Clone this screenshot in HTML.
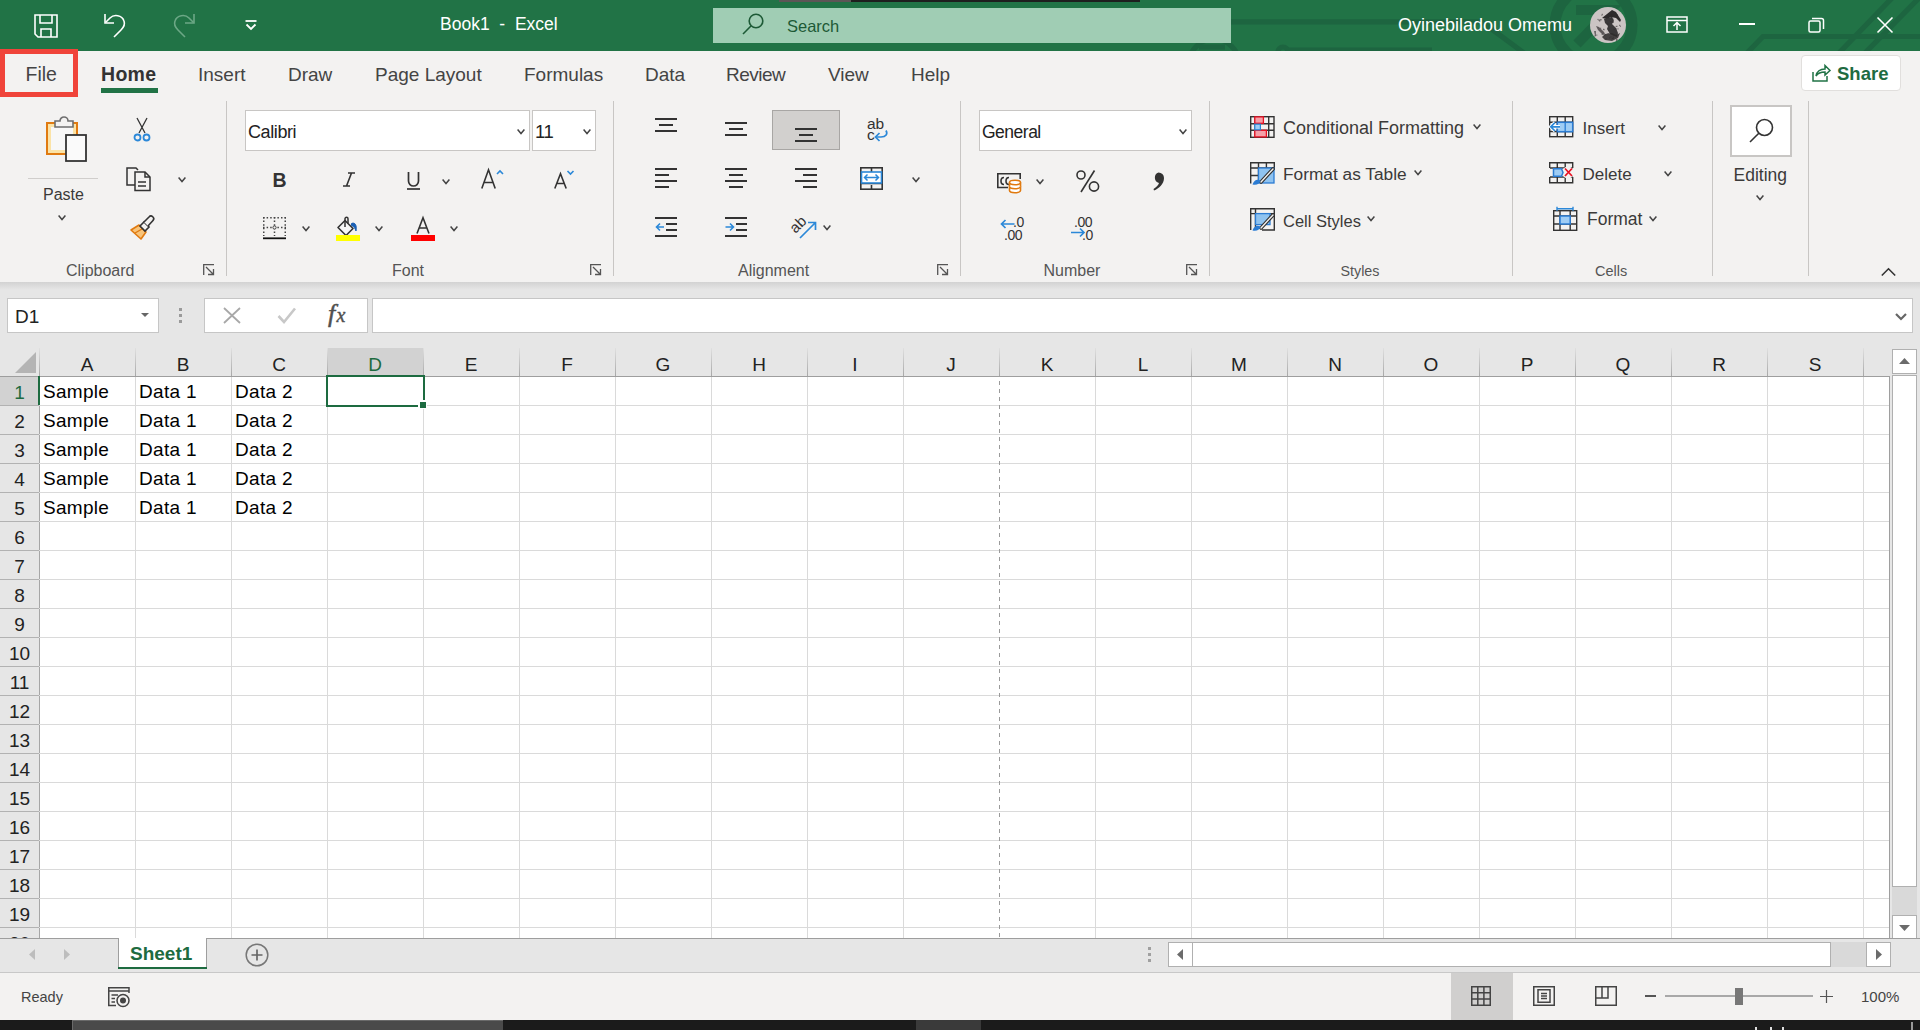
<!DOCTYPE html><html><head><meta charset="utf-8"><style>
html,body{margin:0;padding:0;width:1920px;height:1030px;overflow:hidden;background:#f3f2f1;font-family:"Liberation Sans",sans-serif;position:relative}
.t{position:absolute;white-space:pre;line-height:1}
svg{overflow:visible}
</style></head><body>
<div style="position:absolute;left:0px;top:0px;width:1920px;height:51px;background:#217346"></div>
<div style="position:absolute;left:779px;top:0px;width:72px;height:2px;background:#5c5656"></div>
<div style="position:absolute;left:851px;top:0px;width:289px;height:2px;background:#1e1e1e"></div>
<svg style="position:absolute;left:0px;top:0px;clip-path:inset(0 0 0 0)" width="1920" height="51" viewBox="0 0 1920 51"><g fill="none" stroke="#1d6540" stroke-width="5.2">
<path d="M1231 21.8 H1482 L1524 53"/>
<circle cx="1214" cy="64" r="25"/>
<path d="M1199 47 H1225"/>
<circle cx="1283" cy="52" r="5"/>
<path d="M1288 50 H1432"/>
<circle cx="1593.5" cy="25" r="38.5" stroke-width="11"/>
<path d="M1576 10 H1610 L1577 44" stroke-width="10" stroke-linejoin="miter"/>
<path d="M1747 53 L1763 36.5 H1922"/>
<path d="M1839 53 L1893 -3"/>
<path d="M1865 53 L1922 -5"/>
</g></svg>
<svg style="position:absolute;left:34px;top:14px;" width="24" height="24" viewBox="0 0 24 24"><g fill="none" stroke="#fff" stroke-width="1.6">
<path d="M1 1 H23 V23 H4 L1 20 Z"/>
<path d="M6 1 V9 H18 V1"/>
<path d="M7 23 V15 H17 V23"/>
</g></svg>
<svg style="position:absolute;left:104px;top:13px;" width="22" height="25" viewBox="0 0 22 25"><g fill="none" stroke="#fff" stroke-width="1.6">
<path d="M1 1 V10 H10"/>
<path d="M1.5 9.5 L6 5 C10 1 18 2 20 8 C21.5 12 19 15 17 17 L10 24"/>
</g></svg>
<svg style="position:absolute;left:173px;top:13px;" width="22" height="25" viewBox="0 0 22 25"><g fill="none" stroke="#7fb596" stroke-width="1.6" opacity="0.8">
<path d="M21 1 V10 H12"/>
<path d="M20.5 9.5 L16 5 C12 1 4 2 2 8 C0.5 12 3 15 5 17 L12 24"/>
</g></svg>
<svg style="position:absolute;left:245px;top:20px;" width="12" height="10" viewBox="0 0 12 10"><path d="M0.5 1 H11.5" stroke="#fff" stroke-width="1.8"/><path d="M1.5 4.5 L6 9 L10.5 4.5" fill="none" stroke="#fff" stroke-width="1.8"/></svg>
<div class="t" style="left:440.0px;top:15.7px;font-size:17.5px;color:#fff;font-weight:400;">Book1  -  Excel</div>
<div style="position:absolute;left:713px;top:8px;width:518px;height:35px;background:#a0cdb4"></div>
<svg style="position:absolute;left:741px;top:13px;" width="24" height="24" viewBox="0 0 24 24"><g fill="none" stroke="#1d5a36" stroke-width="1.6"><circle cx="15" cy="8" r="6.8"/><path d="M10.2 12.8 L2 21"/></g></svg>
<div class="t" style="left:787.0px;top:18.0px;font-size:16.5px;color:#1d5a36;font-weight:400;">Search</div>
<div class="t" style="left:1398.0px;top:16.3px;font-size:18px;color:#fff;font-weight:400;">Oyinebiladou Omemu</div>
<svg style="position:absolute;left:1590px;top:7px;" width="36" height="36" viewBox="0 0 36 36"><defs><clipPath id="av"><circle cx="18" cy="18" r="18"/></clipPath></defs><circle cx="18" cy="18" r="18" fill="#cbc4c4"/>
<g clip-path="url(#av)" fill="#2e2a2c">
<path d="M12 11 L22 3 L26 5 L31 13 L30 15 L26 11 L21 10 L17 12 Z"/>
<path d="M14 12 L22 10 L24 14 L22 17 L26 21 L28 26 L27 30 L24 29 L20 27 L17 22 L18 19 L15 16 Z" opacity="0.92"/>
<path d="M15 27 L22 26 L26 28 L30 26 L28 31 L22 34 L15 33 L12 30 Z" opacity="0.85"/>
<path d="M6 19 L9 20 L14 25 L15 27 L13 28 L8 23 Z" opacity="0.7"/>
<path d="M8 13 L11 12 L10 15 Z" opacity="0.6"/>
<path d="M4 24 L6 24 L6 29 L5 29 Z" opacity="0.6"/>
<rect x="10.2" y="20.7" width="1" height="1" opacity="0.7"/><rect x="13.6" y="22.3" width="1" height="1" opacity="0.7"/><rect x="20.3" y="7.8" width="1" height="1" opacity="0.7"/><rect x="4.3" y="28.6" width="1" height="1" opacity="0.7"/><rect x="10.7" y="12.3" width="1" height="1" opacity="0.7"/><rect x="29.9" y="18.7" width="1" height="1" opacity="0.7"/><rect x="25.7" y="18.9" width="1" height="1" opacity="0.7"/><rect x="20.6" y="10.1" width="1" height="1" opacity="0.7"/><rect x="20.5" y="29.4" width="1" height="1" opacity="0.7"/><rect x="17.6" y="26.0" width="1" height="1" opacity="0.7"/><rect x="21.5" y="7.7" width="1" height="1" opacity="0.7"/><rect x="23.7" y="22.0" width="1" height="1" opacity="0.7"/><rect x="11.8" y="6.8" width="1" height="1" opacity="0.7"/><rect x="26.5" y="18.8" width="1" height="1" opacity="0.7"/><rect x="22.7" y="29.7" width="1" height="1" opacity="0.7"/><rect x="22.6" y="30.9" width="1" height="1" opacity="0.7"/><rect x="14.3" y="27.6" width="1" height="1" opacity="0.7"/><rect x="15.6" y="31.3" width="1" height="1" opacity="0.7"/><rect x="26.9" y="8.6" width="1" height="1" opacity="0.7"/><rect x="7.5" y="11.9" width="1" height="1" opacity="0.7"/><rect x="29.1" y="17.8" width="1" height="1" opacity="0.7"/><rect x="20.3" y="14.1" width="1" height="1" opacity="0.7"/><rect x="17.2" y="16.4" width="1" height="1" opacity="0.7"/><rect x="13.1" y="21.8" width="1" height="1" opacity="0.7"/><rect x="19.2" y="30.4" width="1" height="1" opacity="0.7"/><rect x="21.7" y="31.1" width="1" height="1" opacity="0.7"/><rect x="26.3" y="32.8" width="1" height="1" opacity="0.7"/><rect x="21.5" y="10.4" width="1" height="1" opacity="0.7"/><rect x="26.4" y="32.0" width="1" height="1" opacity="0.7"/><rect x="27.5" y="21.4" width="1" height="1" opacity="0.7"/><rect x="22.6" y="11.7" width="1" height="1" opacity="0.7"/><rect x="25.6" y="21.5" width="1" height="1" opacity="0.7"/><rect x="11.4" y="7.7" width="1" height="1" opacity="0.7"/><rect x="26.2" y="32.7" width="1" height="1" opacity="0.7"/><rect x="6.3" y="27.6" width="1" height="1" opacity="0.7"/><rect x="14.7" y="10.1" width="1" height="1" opacity="0.7"/><rect x="11.6" y="26.8" width="1" height="1" opacity="0.7"/><rect x="26.7" y="7.2" width="1" height="1" opacity="0.7"/><rect x="20.0" y="7.2" width="1" height="1" opacity="0.7"/><rect x="22.7" y="14.9" width="1" height="1" opacity="0.7"/></g></svg>
<svg style="position:absolute;left:1666px;top:16px;" width="22" height="17" viewBox="0 0 22 17"><g fill="none" stroke="#fff" stroke-width="1.5"><rect x="1" y="1" width="20" height="15"/><path d="M1 4.5 H21"/><path d="M11 14 V7 M7.5 10 L11 6.5 L14.5 10"/></g></svg>
<div style="position:absolute;left:1739px;top:23px;width:16px;height:2px;background:#fff"></div>
<svg style="position:absolute;left:1808px;top:17px;" width="17" height="16" viewBox="0 0 17 16"><g fill="none" stroke="#fff" stroke-width="1.5"><rect x="1" y="4" width="11" height="11" rx="1.5"/><path d="M4 1.5 H13.5 A2 2 0 0 1 15.5 3.5 V12"/></g></svg>
<svg style="position:absolute;left:1877px;top:17px;" width="16" height="16" viewBox="0 0 16 16"><g stroke="#fff" stroke-width="1.6"><path d="M0.5 0.5 L15.5 15.5 M15.5 0.5 L0.5 15.5"/></g></svg>
<div style="position:absolute;left:0px;top:51px;width:1920px;height:231px;background:#f3f2f1"></div>
<div class="t" style="left:25.5px;top:64.5px;font-size:19.5px;color:#444;font-weight:400;">File</div>
<div class="t" style="left:101.0px;top:64.5px;font-size:19.5px;color:#333;font-weight:700;letter-spacing:0.3px">Home</div>
<div style="position:absolute;left:101px;top:88px;width:57px;height:5px;background:#217346"></div>
<div class="t" style="left:198.0px;top:64.9px;font-size:19px;color:#444;font-weight:400;">Insert</div>
<div class="t" style="left:288.0px;top:64.9px;font-size:19px;color:#444;font-weight:400;">Draw</div>
<div class="t" style="left:375.0px;top:64.9px;font-size:19px;color:#444;font-weight:400;">Page Layout</div>
<div class="t" style="left:524.0px;top:64.9px;font-size:19px;color:#444;font-weight:400;">Formulas</div>
<div class="t" style="left:645.0px;top:64.9px;font-size:19px;color:#444;font-weight:400;">Data</div>
<div class="t" style="left:726.0px;top:64.9px;font-size:19px;color:#444;font-weight:400;letter-spacing:-0.5px">Review</div>
<div class="t" style="left:828.0px;top:64.9px;font-size:19px;color:#444;font-weight:400;">View</div>
<div class="t" style="left:911.0px;top:64.9px;font-size:19px;color:#444;font-weight:400;">Help</div>
<div style="position:absolute;left:0px;top:49px;width:78px;height:48px;box-sizing:border-box;border:5px solid #f0443a"></div>
<div style="position:absolute;left:1801px;top:55px;width:100px;height:36px;box-sizing:border-box;border:1px solid #e1dfdd;border-radius:4px;background:#fff"></div>
<svg style="position:absolute;left:1812px;top:64px;" width="19" height="18" viewBox="0 0 19 18"><g fill="none" stroke="#217346" stroke-width="1.5"><path d="M1 8 V17 H15 V12"/><path d="M4 12 C5 7 9 5 13 5 V1.5 L18 6.5 L13 11 V8 C9 8 6 9 4 12 Z"/></g></svg>
<div class="t" style="left:1837.0px;top:65.3px;font-size:18.5px;color:#1e6b41;font-weight:700;">Share</div>
<svg style="position:absolute;left:46px;top:117px;" width="41" height="45" viewBox="0 0 41 45"><path d="M1 6 H31 V37 H1 Z" fill="#fbe3a6" stroke="#e07a10" stroke-width="2"/>
<path d="M5 10 H27 V33 H5 Z" fill="#f7f7f7" stroke="none"/>
<path d="M9 10 V4 H14 A4 4 0 0 1 22 4 H27 V10 Z" fill="#f3f2f1" stroke="#6e6e6e" stroke-width="1.6"/>
<rect x="20" y="18" width="20" height="26" fill="#fafafa" stroke="#333" stroke-width="1.8"/></svg>
<div style="position:absolute;left:28px;top:178px;width:70px;height:1px;background:#d0cecc"></div>
<div class="t" style="left:43.0px;top:187.0px;font-size:16px;color:#3b3a39;font-weight:400;">Paste</div>
<svg style="position:absolute;left:58px;top:215px;" width="8" height="5" viewBox="0 0 8 5"><path d="M0.6 0.6 L4.0 4.6 L7.4 0.6" fill="none" stroke="#444" stroke-width="1.5"/></svg>
<svg style="position:absolute;left:133px;top:118px;" width="18" height="24" viewBox="0 0 18 24"><g fill="none" stroke="#333" stroke-width="1.3"><path d="M4 0 L12 15 M14 0 L6 15"/></g>
<g fill="none" stroke="#2b88d8" stroke-width="1.8"><circle cx="4.5" cy="19.5" r="3"/><circle cx="13.5" cy="19.5" r="3"/></g></svg>
<svg style="position:absolute;left:126px;top:167px;" width="25" height="25" viewBox="0 0 25 25"><g fill="none" stroke="#333" stroke-width="1.5"><path d="M9 18 H1 V1 H10 L12 3"/><path d="M9 5 H19 L24 10 V23.5 H9 Z"/><path d="M19 5 V10 H24"/><path d="M12 15 H20 M12 19 H20"/></g></svg>
<svg style="position:absolute;left:178px;top:177px;" width="8" height="5" viewBox="0 0 8 5"><path d="M0.6 0.6 L4.0 4.6 L7.4 0.6" fill="none" stroke="#444" stroke-width="1.5"/></svg>
<svg style="position:absolute;left:129px;top:215px;" width="26" height="25" viewBox="0 0 26 25"><path d="M2 15 L10 10 L17 17 L12 24 Z" fill="#f8c47a" stroke="#e07a10" stroke-width="1.6" stroke-linejoin="round"/>
<path d="M6 18 L13 14" stroke="#e07a10" stroke-width="1.4"/>
<g fill="#f3f2f1" stroke="#333" stroke-width="1.6"><path d="M11 11 L15 7 L20 12 L16 16 Z"/><path d="M15 7 L20 2 A2.5 2.5 0 0 1 24 5.5 L19 11"/></g></svg>
<div class="t" style="left:66.0px;top:262.5px;font-size:16px;color:#555;font-weight:400;">Clipboard</div>
<svg style="position:absolute;left:203px;top:264px;" width="12" height="12" viewBox="0 0 12 12"><g fill="none" stroke="#555" stroke-width="1.3"><path d="M0.7 11 V0.7 H11"/><path d="M3 3 L10.5 10.5 M10.5 5 V10.5 H5"/></g></svg>
<div style="position:absolute;left:226px;top:101px;width:1px;height:175px;background:#c8c6c4"></div>
<div style="position:absolute;left:245px;top:110px;width:285px;height:41px;box-sizing:border-box;border:1px solid #c8c6c4;background:#fff"></div>
<div class="t" style="left:248.0px;top:123.3px;font-size:18px;color:#222;font-weight:400;letter-spacing:-0.4px">Calibri</div>
<svg style="position:absolute;left:517px;top:129px;" width="8" height="5" viewBox="0 0 8 5"><path d="M0.6 0.6 L4.0 4.6 L7.4 0.6" fill="none" stroke="#444" stroke-width="1.5"/></svg>
<div style="position:absolute;left:532px;top:110px;width:64px;height:41px;box-sizing:border-box;border:1px solid #c8c6c4;background:#fff"></div>
<div class="t" style="left:535.0px;top:122.8px;font-size:18.5px;color:#222;font-weight:400;letter-spacing:-0.5px">11</div>
<svg style="position:absolute;left:583px;top:129px;" width="8" height="5" viewBox="0 0 8 5"><path d="M0.6 0.6 L4.0 4.6 L7.4 0.6" fill="none" stroke="#444" stroke-width="1.5"/></svg>
<div class="t" style="left:272.5px;top:170.5px;font-size:19.5px;color:#333;font-weight:700;">B</div>
<svg style="position:absolute;left:343px;top:172px;" width="12" height="15" viewBox="0 0 12 15"><g stroke="#333" stroke-width="1.6"><path d="M5 1 H12 M0 14 H7 M8.5 1 L3.5 14"/></g></svg>
<svg style="position:absolute;left:406px;top:172px;" width="16" height="18" viewBox="0 0 16 18"><g fill="none" stroke="#333" stroke-width="1.7"><path d="M2.5 0 V9 A5 5 0 0 0 12.5 9 V0"/><path d="M1 17 H14"/></g></svg>
<svg style="position:absolute;left:442px;top:179px;" width="8" height="5" viewBox="0 0 8 5"><path d="M0.6 0.6 L4.0 4.6 L7.4 0.6" fill="none" stroke="#444" stroke-width="1.5"/></svg>
<svg style="position:absolute;left:481px;top:169px;" width="24" height="20" viewBox="0 0 24 20"><path d="M0.8 19.5 L7.5 0.8 L14.2 19.5 M3 13.5 H12" fill="none" stroke="#333" stroke-width="1.6"/><path d="M16 5 L19 2 L22 5" fill="none" stroke="#2b88d8" stroke-width="1.6"/></svg>
<svg style="position:absolute;left:554px;top:170px;" width="21" height="19" viewBox="0 0 21 19"><path d="M0.8 18.5 L6.5 3.8 L12.2 18.5 M2.6 13.5 H10.4" fill="none" stroke="#333" stroke-width="1.6"/><path d="M13.5 1 L16.5 4 L19.5 1" fill="none" stroke="#2b88d8" stroke-width="1.6"/></svg>
<svg style="position:absolute;left:263px;top:217px;" width="23" height="23" viewBox="0 0 23 23"><g fill="#444"><rect x="0" y="0" width="23" height="1.5" fill="none"/></g>
<g fill="none" stroke="#444" stroke-width="1.5" stroke-dasharray="1.5 2.1"><path d="M0.75 0 V19"/><path d="M22.25 0 V19"/><path d="M0 0.75 H23"/><path d="M11.5 0 V19"/><path d="M0 10.5 H23"/></g>
<circle cx="11.5" cy="10.5" r="1.6" fill="#f3f2f1" stroke="#444" stroke-width="1"/>
<path d="M0 21.3 H23" stroke="#111" stroke-width="1.8"/></svg>
<svg style="position:absolute;left:302px;top:226px;" width="8" height="5" viewBox="0 0 8 5"><path d="M0.6 0.6 L4.0 4.6 L7.4 0.6" fill="none" stroke="#444" stroke-width="1.5"/></svg>
<svg style="position:absolute;left:336px;top:217px;" width="25" height="24" viewBox="0 0 25 24"><path d="M2 10.5 L9 3.5 L17 11.5 L10 18.5 Z" fill="#f7f7f7" stroke="#333" stroke-width="1.6" stroke-linejoin="round"/>
<path d="M9 10 V1.8 A1.5 1.5 0 0 1 12 1.8 V6.5" fill="none" stroke="#333" stroke-width="1.5"/>
<path d="M15.5 6.5 C19 5 21 8 20 14 C19 11 18 9.5 15.5 8.5 Z" fill="#1a5fb4" stroke="#1a5fb4" stroke-width="1"/>
<rect x="0" y="18" width="24" height="6" fill="#ffff00"/></svg>
<svg style="position:absolute;left:375px;top:226px;" width="8" height="5" viewBox="0 0 8 5"><path d="M0.6 0.6 L4.0 4.6 L7.4 0.6" fill="none" stroke="#444" stroke-width="1.5"/></svg>
<svg style="position:absolute;left:411px;top:217px;" width="25" height="24" viewBox="0 0 25 24"><path d="M6 16.5 L12 0.8 L18 16.5 M8.2 11 H15.8" fill="none" stroke="#333" stroke-width="1.6"/><rect x="0" y="18" width="24" height="6" fill="#ff0000"/></svg>
<svg style="position:absolute;left:450px;top:226px;" width="8" height="5" viewBox="0 0 8 5"><path d="M0.6 0.6 L4.0 4.6 L7.4 0.6" fill="none" stroke="#444" stroke-width="1.5"/></svg>
<div class="t" style="left:392.0px;top:262.5px;font-size:16px;color:#555;font-weight:400;">Font</div>
<svg style="position:absolute;left:590px;top:264px;" width="12" height="12" viewBox="0 0 12 12"><g fill="none" stroke="#555" stroke-width="1.3"><path d="M0.7 11 V0.7 H11"/><path d="M3 3 L10.5 10.5 M10.5 5 V10.5 H5"/></g></svg>
<div style="position:absolute;left:613px;top:101px;width:1px;height:175px;background:#c8c6c4"></div>
<svg style="position:absolute;left:655px;top:0px;top:0" width="23" height="260" viewBox="0 0 23 260"><rect x="0" y="118" width="22" height="2" fill="#333"/><rect x="4" y="124" width="14" height="2" fill="#333"/><rect x="0" y="130" width="22" height="2" fill="#333"/></svg>
<svg style="position:absolute;left:725px;top:0px;top:0" width="23" height="260" viewBox="0 0 23 260"><rect x="0" y="122" width="22" height="2" fill="#333"/><rect x="4" y="128" width="14" height="2" fill="#333"/><rect x="0" y="134" width="22" height="2" fill="#333"/></svg>
<div style="position:absolute;left:772px;top:110px;width:68px;height:40px;box-sizing:border-box;border:1px solid #a8a6a4;background:#d2d0ce"></div>
<svg style="position:absolute;left:795px;top:0px;top:0" width="23" height="260" viewBox="0 0 23 260"><rect x="0" y="128" width="22" height="2" fill="#333"/><rect x="4" y="134" width="14" height="2" fill="#333"/><rect x="0" y="140" width="22" height="2" fill="#333"/></svg>
<svg style="position:absolute;left:866px;top:119px;" width="24" height="24" viewBox="0 0 24 24"><text x="1" y="10" font-family="Liberation Sans" font-size="15.5" fill="#333">ab</text><text x="1" y="21" font-family="Liberation Sans" font-size="15.5" fill="#333">c</text>
<path d="M20 11.5 C22 15 20 18 15 18 H10" fill="none" stroke="#2b88d8" stroke-width="1.7"/><path d="M13.5 14 L9.5 18 L13.5 22" fill="none" stroke="#2b88d8" stroke-width="1.7"/></svg>
<svg style="position:absolute;left:655px;top:0px;top:0" width="23" height="260" viewBox="0 0 23 260"><rect x="0" y="168" width="22" height="2" fill="#333"/><rect x="0" y="174" width="14" height="2" fill="#333"/><rect x="0" y="180" width="22" height="2" fill="#333"/><rect x="0" y="186" width="14" height="2" fill="#333"/></svg>
<svg style="position:absolute;left:725px;top:0px;top:0" width="23" height="260" viewBox="0 0 23 260"><rect x="0" y="168" width="22" height="2" fill="#333"/><rect x="4" y="174" width="14" height="2" fill="#333"/><rect x="0" y="180" width="22" height="2" fill="#333"/><rect x="4" y="186" width="14" height="2" fill="#333"/></svg>
<svg style="position:absolute;left:795px;top:0px;top:0" width="23" height="260" viewBox="0 0 23 260"><rect x="0" y="168" width="22" height="2" fill="#333"/><rect x="8" y="174" width="14" height="2" fill="#333"/><rect x="0" y="180" width="22" height="2" fill="#333"/><rect x="8" y="186" width="14" height="2" fill="#333"/></svg>
<svg style="position:absolute;left:860px;top:167px;" width="23" height="23" viewBox="0 0 23 23"><g fill="none" stroke="#333" stroke-width="1.6"><rect x="0.8" y="0.8" width="21.4" height="21.4"/><path d="M11.5 1 V5 M11.5 18 V22 M1 16.5 H22"/></g>
<rect x="1.5" y="5" width="20" height="11" fill="#fff" stroke="#2b88d8" stroke-width="1.6"/>
<path d="M4.5 10.5 H18.5 M7.5 7.5 L4.5 10.5 L7.5 13.5 M15.5 7.5 L18.5 10.5 L15.5 13.5" fill="none" stroke="#2b88d8" stroke-width="1.5"/></svg>
<svg style="position:absolute;left:912px;top:177px;" width="8" height="5" viewBox="0 0 8 5"><path d="M0.6 0.6 L4.0 4.6 L7.4 0.6" fill="none" stroke="#444" stroke-width="1.5"/></svg>
<svg style="position:absolute;left:655px;top:217px;" width="23" height="21" viewBox="0 0 23 21"><rect x="0" y="0" width="22" height="2" fill="#333"/><rect x="11" y="6" width="11" height="2" fill="#333"/><rect x="11" y="12" width="11" height="2" fill="#333"/><rect x="0" y="18" width="22" height="2" fill="#333"/>
<path d="M9 10 H1.5 M5 6.5 L1.5 10 L5 13.5" fill="none" stroke="#2b88d8" stroke-width="1.6"/></svg>
<svg style="position:absolute;left:725px;top:217px;" width="23" height="21" viewBox="0 0 23 21"><rect x="0" y="0" width="22" height="2" fill="#333"/><rect x="11" y="6" width="11" height="2" fill="#333"/><rect x="11" y="12" width="11" height="2" fill="#333"/><rect x="0" y="18" width="22" height="2" fill="#333"/>
<path d="M0.5 10 H8.5 M5 6.5 L8.5 10 L5 13.5" fill="none" stroke="#2b88d8" stroke-width="1.6"/></svg>
<svg style="position:absolute;left:790px;top:214px;" width="28" height="26" viewBox="0 0 28 26"><text x="0" y="0" font-family="Liberation Sans" font-size="15" fill="#333" transform="translate(5.5,20) rotate(-45)">ab</text>
<path d="M10 24 L25 9 M18 8.5 H25.5 V16" fill="none" stroke="#2b88d8" stroke-width="1.7"/></svg>
<svg style="position:absolute;left:823px;top:225px;" width="8" height="5" viewBox="0 0 8 5"><path d="M0.6 0.6 L4.0 4.6 L7.4 0.6" fill="none" stroke="#444" stroke-width="1.5"/></svg>
<div class="t" style="left:738.0px;top:262.5px;font-size:16px;color:#555;font-weight:400;">Alignment</div>
<svg style="position:absolute;left:937px;top:264px;" width="12" height="12" viewBox="0 0 12 12"><g fill="none" stroke="#555" stroke-width="1.3"><path d="M0.7 11 V0.7 H11"/><path d="M3 3 L10.5 10.5 M10.5 5 V10.5 H5"/></g></svg>
<div style="position:absolute;left:960px;top:101px;width:1px;height:175px;background:#c8c6c4"></div>
<div style="position:absolute;left:979px;top:110px;width:213px;height:41px;box-sizing:border-box;border:1px solid #c8c6c4;background:#fff"></div>
<div class="t" style="left:982.0px;top:123.7px;font-size:17.5px;color:#222;font-weight:400;letter-spacing:-0.5px">General</div>
<svg style="position:absolute;left:1179px;top:129px;" width="8" height="5" viewBox="0 0 8 5"><path d="M0.6 0.6 L4.0 4.6 L7.4 0.6" fill="none" stroke="#444" stroke-width="1.5"/></svg>
<svg style="position:absolute;left:997px;top:173px;" width="25" height="21" viewBox="0 0 25 21"><g fill="none" stroke="#333" stroke-width="1.6"><path d="M11 14.5 H0.8 V0.8 H23.2 V6"/><path d="M7 4.5 A3 3.5 0 0 0 7 11.5 M12 4.5 A3 3.5 0 0 0 12 11.5"/></g>
<g fill="#fff" stroke="#e07a10" stroke-width="1.6"><path d="M12.5 9.5 V17.5 A5.5 2.2 0 0 0 23.5 17.5 V9.5"/><ellipse cx="18" cy="9.5" rx="5.5" ry="2.2"/><path d="M12.5 13.5 A5.5 2.2 0 0 0 23.5 13.5"/></g></svg>
<svg style="position:absolute;left:1036px;top:179px;" width="8" height="5" viewBox="0 0 8 5"><path d="M0.6 0.6 L4.0 4.6 L7.4 0.6" fill="none" stroke="#444" stroke-width="1.5"/></svg>
<svg style="position:absolute;left:1076px;top:170px;" width="24" height="23" viewBox="0 0 24 23"><g fill="none" stroke="#333" stroke-width="1.6"><circle cx="5" cy="5" r="4"/><circle cx="18" cy="16.5" r="4.6"/><path d="M18.5 0.5 L5 22"/></g></svg>
<svg style="position:absolute;left:1153px;top:172px;" width="12" height="19" viewBox="0 0 12 19"><path d="M5.5 0.5 A5.5 5.5 0 0 1 11 6 C11 12 6 16.5 1 18.5 L0.5 17 C3.5 15 5.5 13 6 11 A5.5 5.5 0 0 1 5.5 0.5 Z" fill="#333"/></svg>
<svg style="position:absolute;left:1000px;top:216px;" width="26" height="25" viewBox="0 0 26 25"><text x="13" y="11" font-family="Liberation Sans" font-size="14" fill="#333" letter-spacing="-0.5">.0</text><text x="4" y="23.5" font-family="Liberation Sans" font-size="14" fill="#333" letter-spacing="-0.5">.00</text>
<path d="M14.5 8 H1.5 M5.5 4 L1.5 8 L5.5 12" fill="none" stroke="#2b88d8" stroke-width="1.7"/></svg>
<svg style="position:absolute;left:1070px;top:216px;" width="26" height="25" viewBox="0 0 26 25"><text x="4" y="11" font-family="Liberation Sans" font-size="14" fill="#333" letter-spacing="-0.5">.00</text><text x="12" y="23.5" font-family="Liberation Sans" font-size="14" fill="#333" letter-spacing="-0.5">.0</text>
<path d="M1 16.5 H14 M10 12.5 L14 16.5 L10 20.5" fill="none" stroke="#2b88d8" stroke-width="1.7"/></svg>
<div class="t" style="left:1043.5px;top:262.5px;font-size:16px;color:#555;font-weight:400;">Number</div>
<svg style="position:absolute;left:1186px;top:264px;" width="12" height="12" viewBox="0 0 12 12"><g fill="none" stroke="#555" stroke-width="1.3"><path d="M0.7 11 V0.7 H11"/><path d="M3 3 L10.5 10.5 M10.5 5 V10.5 H5"/></g></svg>
<div style="position:absolute;left:1209px;top:101px;width:1px;height:175px;background:#c8c6c4"></div>
<svg style="position:absolute;left:1250px;top:116px;" width="25" height="22" viewBox="0 0 25 22"><g fill="none" stroke="#333" stroke-width="1.4"><rect x="0.7" y="0.7" width="23.3" height="20.6"/><path d="M5 1 V21 M18.7 1 V21 M1 7.7 H24 M1 14.3 H24"/></g>
<rect x="4.8" y="0.9" width="8.6" height="6.4" fill="#f4a0a8" stroke="#e81123" stroke-width="1.3"/>
<rect x="4.8" y="14.3" width="11.6" height="6.6" fill="#f4a0a8" stroke="#e81123" stroke-width="1.3"/>
<rect x="4.8" y="8.2" width="5.6" height="5.6" fill="#9fcdf5" stroke="#2b88d8" stroke-width="1.2"/></svg>
<div class="t" style="left:1283.0px;top:119.3px;font-size:18px;color:#3b3a39;font-weight:400;">Conditional Formatting</div>
<svg style="position:absolute;left:1473px;top:124px;" width="8" height="5" viewBox="0 0 8 5"><path d="M0.6 0.6 L4.0 4.6 L7.4 0.6" fill="none" stroke="#444" stroke-width="1.5"/></svg>
<svg style="position:absolute;left:1250px;top:162px;" width="25" height="23" viewBox="0 0 25 23"><g fill="none" stroke="#333" stroke-width="1.4"><path d="M0.7 21.5 V0.7 H24.3 V8"/><path d="M8.5 1 V21 M16.4 1 V6 M1 6 H24 M1 13.5 H8"/></g>
<rect x="8.5" y="6" width="15.5" height="15" fill="#8fc3f0" stroke="#2b7cd3" stroke-width="1.3"/><path d="M11 20 L23 7" stroke="#333" stroke-width="3.6" stroke-linecap="round"/><path d="M11 20 L23 7" stroke="#f3f2f1" stroke-width="1.4" stroke-linecap="round"/><path d="M2.5 22.5 C4 18 7 16.5 10.5 18.5 C10 21.5 7 23.5 2.5 22.5 Z" fill="#2b7cd3"/></svg>
<div class="t" style="left:1283.0px;top:165.9px;font-size:17.3px;color:#3b3a39;font-weight:400;">Format as Table</div>
<svg style="position:absolute;left:1414px;top:170px;" width="8" height="5" viewBox="0 0 8 5"><path d="M0.6 0.6 L4.0 4.6 L7.4 0.6" fill="none" stroke="#444" stroke-width="1.5"/></svg>
<svg style="position:absolute;left:1250px;top:208px;" width="25" height="23" viewBox="0 0 25 23"><g fill="none" stroke="#333" stroke-width="1.4"><path d="M0.7 22 V0.7 H24.3 V22 H12"/><path d="M1 5.6 H24 M5.5 1 V22"/></g>
<rect x="5.5" y="5.6" width="14.5" height="11" fill="#8fc3f0" stroke="#2b7cd3" stroke-width="1.3"/><path d="M11 20 L23 7" stroke="#333" stroke-width="3.6" stroke-linecap="round"/><path d="M11 20 L23 7" stroke="#f3f2f1" stroke-width="1.4" stroke-linecap="round"/><path d="M2.5 22.5 C4 18 7 16.5 10.5 18.5 C10 21.5 7 23.5 2.5 22.5 Z" fill="#2b7cd3"/></svg>
<div class="t" style="left:1283.0px;top:212.5px;font-size:16.5px;color:#3b3a39;font-weight:400;">Cell Styles</div>
<svg style="position:absolute;left:1367px;top:216px;" width="8" height="5" viewBox="0 0 8 5"><path d="M0.6 0.6 L4.0 4.6 L7.4 0.6" fill="none" stroke="#444" stroke-width="1.5"/></svg>
<div class="t" style="left:1340.5px;top:263.9px;font-size:14.3px;color:#555;font-weight:400;">Styles</div>
<div style="position:absolute;left:1512px;top:101px;width:1px;height:175px;background:#c8c6c4"></div>
<svg style="position:absolute;left:1549px;top:116px;" width="25" height="22" viewBox="0 0 25 22"><g fill="none" stroke="#333" stroke-width="1.4"><rect x="0.7" y="0.7" width="23" height="20"/><path d="M8.3 1 V21 M16.2 1 V21 M1 6.3 H24 M1 15.5 H24"/></g>
<rect x="8.3" y="6.3" width="15.4" height="9.4" fill="#9fcdf5" stroke="#2b7cd3" stroke-width="1.5"/><path d="M16.2 6.5 V15.5" stroke="#2b7cd3" stroke-width="1.3"/>
<path d="M11 10.8 H2 M6 6.5 L1.8 10.8 L6 15" fill="none" stroke="#fff" stroke-width="3.5"/>
<path d="M11 10.8 H2 M6 6.5 L1.8 10.8 L6 15" fill="none" stroke="#2b88d8" stroke-width="1.7"/></svg>
<div class="t" style="left:1582.5px;top:119.6px;font-size:17px;color:#3b3a39;font-weight:400;">Insert</div>
<svg style="position:absolute;left:1658px;top:125px;" width="8" height="5" viewBox="0 0 8 5"><path d="M0.6 0.6 L4.0 4.6 L7.4 0.6" fill="none" stroke="#444" stroke-width="1.5"/></svg>
<svg style="position:absolute;left:1549px;top:162px;" width="25" height="22" viewBox="0 0 25 22"><g fill="none" stroke="#333" stroke-width="1.4"><path d="M0.7 6 V0.7 H23.7 V6 M0.7 15 V20.7 H23.7 V15"/><path d="M8.3 1 V6 M16.2 1 V6 M8.3 15 V21 M16.2 15 V21 M1 6 H24 M1 15 H24"/></g>
<circle cx="19" cy="10.5" r="6" fill="#f3f2f1"/>
<path d="M4.5 6.8 H12.5 L14 10.5 L12.5 14.2 H4.5 Z" fill="#9fcdf5" stroke="#2b7cd3" stroke-width="1.5"/>
<path d="M16 6.5 L23 14 M23 6.5 L16 14" stroke="#e81123" stroke-width="1.7"/></svg>
<div class="t" style="left:1582.5px;top:165.6px;font-size:17px;color:#3b3a39;font-weight:400;">Delete</div>
<svg style="position:absolute;left:1664px;top:171px;" width="8" height="5" viewBox="0 0 8 5"><path d="M0.6 0.6 L4.0 4.6 L7.4 0.6" fill="none" stroke="#444" stroke-width="1.5"/></svg>
<svg style="position:absolute;left:1552px;top:206px;" width="26" height="25" viewBox="0 0 26 25"><g fill="none" stroke="#333" stroke-width="1.4"><rect x="1.7" y="4.7" width="23" height="19.6"/><path d="M8 5 V24 M18.2 5 V24 M2 10 H25 M2 18 H25"/></g>
<rect x="8" y="10" width="10.2" height="8" fill="#9fcdf5" stroke="#2b7cd3" stroke-width="1.5"/>
<path d="M5 2.8 H21 M5 0.8 V4.8 M21 0.8 V4.8" stroke="#2b88d8" stroke-width="1.4"/></svg>
<div class="t" style="left:1587.0px;top:211.2px;font-size:17.5px;color:#3b3a39;font-weight:400;">Format</div>
<svg style="position:absolute;left:1649px;top:216px;" width="8" height="5" viewBox="0 0 8 5"><path d="M0.6 0.6 L4.0 4.6 L7.4 0.6" fill="none" stroke="#444" stroke-width="1.5"/></svg>
<div class="t" style="left:1595.0px;top:263.7px;font-size:14.5px;color:#555;font-weight:400;">Cells</div>
<div style="position:absolute;left:1712px;top:101px;width:1px;height:175px;background:#c8c6c4"></div>
<div style="position:absolute;left:1730px;top:105px;width:62px;height:52px;box-sizing:border-box;border:2px solid #c8c6c4;background:#fff"></div>
<svg style="position:absolute;left:1748px;top:117px;" width="28" height="28" viewBox="0 0 28 28"><g fill="none" stroke="#333" stroke-width="1.6"><circle cx="16.5" cy="10.5" r="8"/><path d="M10.8 16.2 L2 25"/></g></svg>
<div class="t" style="left:1733.5px;top:166.7px;font-size:17.5px;color:#3b3a39;font-weight:400;">Editing</div>
<svg style="position:absolute;left:1756px;top:194.5px;" width="8" height="5" viewBox="0 0 8 5"><path d="M0.6 0.6 L4.0 4.6 L7.4 0.6" fill="none" stroke="#444" stroke-width="1.5"/></svg>
<div style="position:absolute;left:1808px;top:101px;width:1px;height:175px;background:#c8c6c4"></div>
<svg style="position:absolute;left:1881px;top:268px;" width="15" height="8" viewBox="0 0 15 8"><path d="M0.8 7.5 L7.5 0.8 L14.2 7.5" fill="none" stroke="#333" stroke-width="1.6"/></svg>
<div style="position:absolute;left:0;top:282px;width:1920px;height:8px;background:linear-gradient(#d2d2d2,#e6e6e6)"></div>
<div style="position:absolute;left:0px;top:290px;width:1920px;height:58px;background:#e6e6e6"></div>
<div style="position:absolute;left:7px;top:298px;width:152px;height:35px;box-sizing:border-box;border:1px solid #c6c6c6;background:#fff"></div>
<div class="t" style="left:15.0px;top:306.9px;font-size:19px;color:#222;font-weight:400;">D1</div>
<svg style="position:absolute;left:141px;top:313px;" width="8" height="4" viewBox="0 0 8 4"><path d="M0 0 H8 L4 4 Z" fill="#666"/></svg>
<div style="position:absolute;left:179px;top:308px;width:3px;height:3px;background:#9a9a9a"></div>
<div style="position:absolute;left:179px;top:314px;width:3px;height:3px;background:#9a9a9a"></div>
<div style="position:absolute;left:179px;top:320px;width:3px;height:3px;background:#9a9a9a"></div>
<div style="position:absolute;left:204px;top:298px;width:164px;height:35px;box-sizing:border-box;border:1px solid #c6c6c6;background:#fff"></div>
<svg style="position:absolute;left:223px;top:307px;" width="18" height="17" viewBox="0 0 18 17"><path d="M1 1 L17 16 M17 1 L1 16" stroke="#a8a8a8" stroke-width="1.8"/></svg>
<svg style="position:absolute;left:277px;top:307px;" width="19" height="17" viewBox="0 0 19 17"><path d="M1.5 9 L7 15 L18 1.5" fill="none" stroke="#c8c8c8" stroke-width="2.6"/></svg>
<svg style="position:absolute;left:326px;top:301px;" width="26" height="28" viewBox="0 0 26 28"><text x="2" y="21" font-family="Liberation Serif" font-style="italic" font-size="26" fill="#505050" stroke="#505050" stroke-width="0.5">f</text><text x="10.5" y="21" font-family="Liberation Serif" font-style="italic" font-size="20" fill="#505050" stroke="#505050" stroke-width="0.4">x</text></svg>
<div style="position:absolute;left:372px;top:298px;width:1541px;height:35px;box-sizing:border-box;border:1px solid #c6c6c6;background:#fff"></div>
<svg style="position:absolute;left:1895px;top:313px;" width="12" height="8" viewBox="0 0 12 8"><path d="M1 1 L6 6 L11 1" fill="none" stroke="#666" stroke-width="2.2"/></svg>
<div style="position:absolute;left:0px;top:348px;width:1920px;height:29px;background:#e6e6e6"></div>
<div style="position:absolute;left:1889px;top:377px;width:31px;height:561px;background:#e6e6e6"></div>
<div style="position:absolute;left:39px;top:377px;width:1850px;height:561px;background:#fff"></div>
<div style="position:absolute;left:0px;top:377px;width:40px;height:561px;background:#e6e6e6"></div>
<div style="position:absolute;left:0px;top:377px;width:39px;height:28px;background:#d2d2d2"></div>
<div style="position:absolute;left:327px;top:348px;width:97px;height:28px;background:#d2d2d2"></div>
<svg style="position:absolute;left:15px;top:352px;" width="21" height="21" viewBox="0 0 21 21"><path d="M21 0 V21 H0 Z" fill="#b4b4b4"/></svg>
<svg style="position:absolute;left:0px;top:348px;" width="1920" height="28" viewBox="0 0 1920 28"><defs><linearGradient id="hg" x1="0" y1="0" x2="0" y2="1"><stop offset="0" stop-color="#e0e0e0"/><stop offset="1" stop-color="#a8a8a8"/></linearGradient></defs><rect x="135" y="0" width="1" height="28" fill="url(#hg)"/><rect x="231" y="0" width="1" height="28" fill="url(#hg)"/><rect x="327" y="0" width="1" height="28" fill="url(#hg)"/><rect x="423" y="0" width="1" height="28" fill="url(#hg)"/><rect x="519" y="0" width="1" height="28" fill="url(#hg)"/><rect x="615" y="0" width="1" height="28" fill="url(#hg)"/><rect x="711" y="0" width="1" height="28" fill="url(#hg)"/><rect x="807" y="0" width="1" height="28" fill="url(#hg)"/><rect x="903" y="0" width="1" height="28" fill="url(#hg)"/><rect x="999" y="0" width="1" height="28" fill="url(#hg)"/><rect x="1095" y="0" width="1" height="28" fill="url(#hg)"/><rect x="1191" y="0" width="1" height="28" fill="url(#hg)"/><rect x="1287" y="0" width="1" height="28" fill="url(#hg)"/><rect x="1383" y="0" width="1" height="28" fill="url(#hg)"/><rect x="1479" y="0" width="1" height="28" fill="url(#hg)"/><rect x="1575" y="0" width="1" height="28" fill="url(#hg)"/><rect x="1671" y="0" width="1" height="28" fill="url(#hg)"/><rect x="1767" y="0" width="1" height="28" fill="url(#hg)"/><rect x="1863" y="0" width="1" height="28" fill="url(#hg)"/><rect x="39" y="0" width="1" height="28" fill="url(#hg)"/></svg>
<div style="position:absolute;left:0px;top:376px;width:1889px;height:1px;background:#9e9e9e"></div>
<div style="position:absolute;left:39px;top:376px;width:1px;height:562px;background:#a6a6a6"></div>
<svg style="position:absolute;left:39px;top:377px;" width="1850" height="561" viewBox="0 0 1850 561"><rect x="96" y="0" width="1" height="561" fill="#dadada"/><rect x="192" y="0" width="1" height="561" fill="#dadada"/><rect x="288" y="0" width="1" height="561" fill="#dadada"/><rect x="384" y="0" width="1" height="561" fill="#dadada"/><rect x="480" y="0" width="1" height="561" fill="#dadada"/><rect x="576" y="0" width="1" height="561" fill="#dadada"/><rect x="672" y="0" width="1" height="561" fill="#dadada"/><rect x="768" y="0" width="1" height="561" fill="#dadada"/><rect x="864" y="0" width="1" height="561" fill="#dadada"/><rect x="1056" y="0" width="1" height="561" fill="#dadada"/><rect x="1152" y="0" width="1" height="561" fill="#dadada"/><rect x="1248" y="0" width="1" height="561" fill="#dadada"/><rect x="1344" y="0" width="1" height="561" fill="#dadada"/><rect x="1440" y="0" width="1" height="561" fill="#dadada"/><rect x="1536" y="0" width="1" height="561" fill="#dadada"/><rect x="1632" y="0" width="1" height="561" fill="#dadada"/><rect x="1728" y="0" width="1" height="561" fill="#dadada"/><rect x="1824" y="0" width="1" height="561" fill="#dadada"/><rect x="0" y="28" width="1850" height="1" fill="#dadada"/><rect x="0" y="57" width="1850" height="1" fill="#dadada"/><rect x="0" y="86" width="1850" height="1" fill="#dadada"/><rect x="0" y="115" width="1850" height="1" fill="#dadada"/><rect x="0" y="144" width="1850" height="1" fill="#dadada"/><rect x="0" y="173" width="1850" height="1" fill="#dadada"/><rect x="0" y="202" width="1850" height="1" fill="#dadada"/><rect x="0" y="231" width="1850" height="1" fill="#dadada"/><rect x="0" y="260" width="1850" height="1" fill="#dadada"/><rect x="0" y="289" width="1850" height="1" fill="#dadada"/><rect x="0" y="318" width="1850" height="1" fill="#dadada"/><rect x="0" y="347" width="1850" height="1" fill="#dadada"/><rect x="0" y="376" width="1850" height="1" fill="#dadada"/><rect x="0" y="405" width="1850" height="1" fill="#dadada"/><rect x="0" y="434" width="1850" height="1" fill="#dadada"/><rect x="0" y="463" width="1850" height="1" fill="#dadada"/><rect x="0" y="492" width="1850" height="1" fill="#dadada"/><rect x="0" y="521" width="1850" height="1" fill="#dadada"/><rect x="0" y="550" width="1850" height="1" fill="#dadada"/></svg>
<svg style="position:absolute;left:0px;top:377px;" width="38" height="561" viewBox="0 0 38 561"><rect x="0" y="28" width="39" height="1" fill="#b2b2b2"/><rect x="0" y="57" width="39" height="1" fill="#b2b2b2"/><rect x="0" y="86" width="39" height="1" fill="#b2b2b2"/><rect x="0" y="115" width="39" height="1" fill="#b2b2b2"/><rect x="0" y="144" width="39" height="1" fill="#b2b2b2"/><rect x="0" y="173" width="39" height="1" fill="#b2b2b2"/><rect x="0" y="202" width="39" height="1" fill="#b2b2b2"/><rect x="0" y="231" width="39" height="1" fill="#b2b2b2"/><rect x="0" y="260" width="39" height="1" fill="#b2b2b2"/><rect x="0" y="289" width="39" height="1" fill="#b2b2b2"/><rect x="0" y="318" width="39" height="1" fill="#b2b2b2"/><rect x="0" y="347" width="39" height="1" fill="#b2b2b2"/><rect x="0" y="376" width="39" height="1" fill="#b2b2b2"/><rect x="0" y="405" width="39" height="1" fill="#b2b2b2"/><rect x="0" y="434" width="39" height="1" fill="#b2b2b2"/><rect x="0" y="463" width="39" height="1" fill="#b2b2b2"/><rect x="0" y="492" width="39" height="1" fill="#b2b2b2"/><rect x="0" y="521" width="39" height="1" fill="#b2b2b2"/><rect x="0" y="550" width="39" height="1" fill="#b2b2b2"/></svg>
<div style="position:absolute;left:38px;top:376px;width:2px;height:29px;background:#1d6b40"></div>
<div style="position:absolute;left:1889px;top:376px;width:1px;height:563px;background:#9e9e9e"></div>
<div style="position:absolute;left:0px;top:938px;width:1890px;height:1px;background:#9e9e9e"></div>
<div class="t" style="left:-113.0px;width:400px;text-align:center;top:354.9px;font-size:19px;color:#222;font-weight:400;">A</div>
<div class="t" style="left:-17.0px;width:400px;text-align:center;top:354.9px;font-size:19px;color:#222;font-weight:400;">B</div>
<div class="t" style="left:79.0px;width:400px;text-align:center;top:354.9px;font-size:19px;color:#222;font-weight:400;">C</div>
<div class="t" style="left:175.0px;width:400px;text-align:center;top:354.9px;font-size:19px;color:#1d6b40;font-weight:400;">D</div>
<div class="t" style="left:271.0px;width:400px;text-align:center;top:354.9px;font-size:19px;color:#222;font-weight:400;">E</div>
<div class="t" style="left:367.0px;width:400px;text-align:center;top:354.9px;font-size:19px;color:#222;font-weight:400;">F</div>
<div class="t" style="left:463.0px;width:400px;text-align:center;top:354.9px;font-size:19px;color:#222;font-weight:400;">G</div>
<div class="t" style="left:559.0px;width:400px;text-align:center;top:354.9px;font-size:19px;color:#222;font-weight:400;">H</div>
<div class="t" style="left:655.0px;width:400px;text-align:center;top:354.9px;font-size:19px;color:#222;font-weight:400;">I</div>
<div class="t" style="left:751.0px;width:400px;text-align:center;top:354.9px;font-size:19px;color:#222;font-weight:400;">J</div>
<div class="t" style="left:847.0px;width:400px;text-align:center;top:354.9px;font-size:19px;color:#222;font-weight:400;">K</div>
<div class="t" style="left:943.0px;width:400px;text-align:center;top:354.9px;font-size:19px;color:#222;font-weight:400;">L</div>
<div class="t" style="left:1039.0px;width:400px;text-align:center;top:354.9px;font-size:19px;color:#222;font-weight:400;">M</div>
<div class="t" style="left:1135.0px;width:400px;text-align:center;top:354.9px;font-size:19px;color:#222;font-weight:400;">N</div>
<div class="t" style="left:1231.0px;width:400px;text-align:center;top:354.9px;font-size:19px;color:#222;font-weight:400;">O</div>
<div class="t" style="left:1327.0px;width:400px;text-align:center;top:354.9px;font-size:19px;color:#222;font-weight:400;">P</div>
<div class="t" style="left:1423.0px;width:400px;text-align:center;top:354.9px;font-size:19px;color:#222;font-weight:400;">Q</div>
<div class="t" style="left:1519.0px;width:400px;text-align:center;top:354.9px;font-size:19px;color:#222;font-weight:400;">R</div>
<div class="t" style="left:1615.0px;width:400px;text-align:center;top:354.9px;font-size:19px;color:#222;font-weight:400;">S</div>
<div class="t" style="left:-180.5px;width:400px;text-align:center;top:382.7px;font-size:19px;color:#1d6b40;font-weight:400;">1</div>
<div class="t" style="left:-180.5px;width:400px;text-align:center;top:411.7px;font-size:19px;color:#222;font-weight:400;">2</div>
<div class="t" style="left:-180.5px;width:400px;text-align:center;top:440.7px;font-size:19px;color:#222;font-weight:400;">3</div>
<div class="t" style="left:-180.5px;width:400px;text-align:center;top:469.7px;font-size:19px;color:#222;font-weight:400;">4</div>
<div class="t" style="left:-180.5px;width:400px;text-align:center;top:498.7px;font-size:19px;color:#222;font-weight:400;">5</div>
<div class="t" style="left:-180.5px;width:400px;text-align:center;top:527.7px;font-size:19px;color:#222;font-weight:400;">6</div>
<div class="t" style="left:-180.5px;width:400px;text-align:center;top:556.7px;font-size:19px;color:#222;font-weight:400;">7</div>
<div class="t" style="left:-180.5px;width:400px;text-align:center;top:585.7px;font-size:19px;color:#222;font-weight:400;">8</div>
<div class="t" style="left:-180.5px;width:400px;text-align:center;top:614.7px;font-size:19px;color:#222;font-weight:400;">9</div>
<div class="t" style="left:-180.5px;width:400px;text-align:center;top:643.7px;font-size:19px;color:#222;font-weight:400;">10</div>
<div class="t" style="left:-180.5px;width:400px;text-align:center;top:672.7px;font-size:19px;color:#222;font-weight:400;">11</div>
<div class="t" style="left:-180.5px;width:400px;text-align:center;top:701.7px;font-size:19px;color:#222;font-weight:400;">12</div>
<div class="t" style="left:-180.5px;width:400px;text-align:center;top:730.7px;font-size:19px;color:#222;font-weight:400;">13</div>
<div class="t" style="left:-180.5px;width:400px;text-align:center;top:759.7px;font-size:19px;color:#222;font-weight:400;">14</div>
<div class="t" style="left:-180.5px;width:400px;text-align:center;top:788.7px;font-size:19px;color:#222;font-weight:400;">15</div>
<div class="t" style="left:-180.5px;width:400px;text-align:center;top:817.7px;font-size:19px;color:#222;font-weight:400;">16</div>
<div class="t" style="left:-180.5px;width:400px;text-align:center;top:846.7px;font-size:19px;color:#222;font-weight:400;">17</div>
<div class="t" style="left:-180.5px;width:400px;text-align:center;top:875.7px;font-size:19px;color:#222;font-weight:400;">18</div>
<div class="t" style="left:-180.5px;width:400px;text-align:center;top:904.7px;font-size:19px;color:#222;font-weight:400;">19</div>
<div class="t" style="left:-180.5px;width:400px;text-align:center;top:933.7px;font-size:19px;color:#222;font-weight:400;">20</div>
<div class="t" style="left:43.0px;top:382.4px;font-size:19px;color:#000;font-weight:400;letter-spacing:0.3px">Sample</div>
<div class="t" style="left:139.0px;top:382.4px;font-size:19px;color:#000;font-weight:400;letter-spacing:0.3px">Data 1</div>
<div class="t" style="left:235.0px;top:382.4px;font-size:19px;color:#000;font-weight:400;letter-spacing:0.3px">Data 2</div>
<div class="t" style="left:43.0px;top:411.4px;font-size:19px;color:#000;font-weight:400;letter-spacing:0.3px">Sample</div>
<div class="t" style="left:139.0px;top:411.4px;font-size:19px;color:#000;font-weight:400;letter-spacing:0.3px">Data 1</div>
<div class="t" style="left:235.0px;top:411.4px;font-size:19px;color:#000;font-weight:400;letter-spacing:0.3px">Data 2</div>
<div class="t" style="left:43.0px;top:440.4px;font-size:19px;color:#000;font-weight:400;letter-spacing:0.3px">Sample</div>
<div class="t" style="left:139.0px;top:440.4px;font-size:19px;color:#000;font-weight:400;letter-spacing:0.3px">Data 1</div>
<div class="t" style="left:235.0px;top:440.4px;font-size:19px;color:#000;font-weight:400;letter-spacing:0.3px">Data 2</div>
<div class="t" style="left:43.0px;top:469.4px;font-size:19px;color:#000;font-weight:400;letter-spacing:0.3px">Sample</div>
<div class="t" style="left:139.0px;top:469.4px;font-size:19px;color:#000;font-weight:400;letter-spacing:0.3px">Data 1</div>
<div class="t" style="left:235.0px;top:469.4px;font-size:19px;color:#000;font-weight:400;letter-spacing:0.3px">Data 2</div>
<div class="t" style="left:43.0px;top:498.4px;font-size:19px;color:#000;font-weight:400;letter-spacing:0.3px">Sample</div>
<div class="t" style="left:139.0px;top:498.4px;font-size:19px;color:#000;font-weight:400;letter-spacing:0.3px">Data 1</div>
<div class="t" style="left:235.0px;top:498.4px;font-size:19px;color:#000;font-weight:400;letter-spacing:0.3px">Data 2</div>
<svg style="position:absolute;left:999px;top:377px;" width="1" height="561" viewBox="0 0 1 561"><path d="M0.5 0 V561" stroke="#9a9a9a" stroke-width="1" stroke-dasharray="4 4" stroke-dashoffset="4"/></svg>
<div style="position:absolute;left:326px;top:375px;width:99px;height:32px;box-sizing:border-box;border:2px solid #1d6b40"></div>
<div style="position:absolute;left:418px;top:400px;width:9px;height:9px;background:#fff"></div>
<div style="position:absolute;left:420px;top:402px;width:6px;height:6px;background:#1d6b40"></div>
<div style="position:absolute;left:1892px;top:349px;width:25px;height:25px;box-sizing:border-box;border:1px solid #b0b0b0;background:#fff"></div>
<svg style="position:absolute;left:1899px;top:358px;" width="11" height="6" viewBox="0 0 11 6"><path d="M0 6 L5.5 0 L11 6 Z" fill="#6b6b6b"/></svg>
<div style="position:absolute;left:1892px;top:375px;width:25px;height:512px;box-sizing:border-box;border:1px solid #b0b0b0;background:#fff"></div>
<div style="position:absolute;left:1892px;top:887px;width:25px;height:28px;background:#d9d9d9"></div>
<div style="position:absolute;left:1892px;top:915px;width:25px;height:25px;box-sizing:border-box;border:1px solid #b0b0b0;background:#fff"></div>
<svg style="position:absolute;left:1899px;top:925px;" width="11" height="6" viewBox="0 0 11 6"><path d="M0 0 L5.5 6 L11 0 Z" fill="#6b6b6b"/></svg>
<div style="position:absolute;left:0px;top:939px;width:1920px;height:33px;background:#e6e6e6"></div>
<div style="position:absolute;left:0px;top:938px;width:1920px;height:1px;background:#9e9e9e"></div>
<svg style="position:absolute;left:29px;top:949px;" width="6" height="11" viewBox="0 0 6 11"><path d="M6 0 V11 L0 5.5 Z" fill="#bdbdbd"/></svg>
<svg style="position:absolute;left:64px;top:949px;" width="6" height="11" viewBox="0 0 6 11"><path d="M0 0 V11 L6 5.5 Z" fill="#bdbdbd"/></svg>
<div style="position:absolute;left:118px;top:938px;width:89px;height:31px;background:#fff;box-sizing:border-box;border-left:1px solid #9e9e9e;border-right:1px solid #9e9e9e"></div>
<div style="position:absolute;left:118px;top:967px;width:89px;height:2px;background:#1d6b40"></div>
<div class="t" style="left:130.0px;top:943.9px;font-size:19px;color:#1d6b40;font-weight:700;">Sheet1</div>
<svg style="position:absolute;left:245px;top:943px;" width="24" height="24" viewBox="0 0 24 24"><circle cx="12" cy="12" r="10.8" fill="none" stroke="#777" stroke-width="1.5"/><path d="M12 6.5 V17.5 M6.5 12 H17.5" stroke="#666" stroke-width="1.7"/></svg>
<div style="position:absolute;left:1148px;top:947px;width:3px;height:3px;background:#a0a0a0"></div>
<div style="position:absolute;left:1148px;top:953px;width:3px;height:3px;background:#a0a0a0"></div>
<div style="position:absolute;left:1148px;top:959px;width:3px;height:3px;background:#a0a0a0"></div>
<div style="position:absolute;left:1168px;top:942px;width:25px;height:25px;box-sizing:border-box;border:1px solid #b0b0b0;background:#fff"></div>
<svg style="position:absolute;left:1177px;top:949px;" width="6" height="11" viewBox="0 0 6 11"><path d="M6 0 V11 L0 5.5 Z" fill="#6b6b6b"/></svg>
<div style="position:absolute;left:1192px;top:942px;width:639px;height:25px;box-sizing:border-box;border:1px solid #b0b0b0;background:#fff"></div>
<div style="position:absolute;left:1831px;top:942px;width:35px;height:25px;background:#d9d9d9"></div>
<div style="position:absolute;left:1866px;top:942px;width:25px;height:25px;box-sizing:border-box;border:1px solid #b0b0b0;background:#fff"></div>
<svg style="position:absolute;left:1876px;top:949px;" width="6" height="11" viewBox="0 0 6 11"><path d="M0 0 V11 L6 5.5 Z" fill="#6b6b6b"/></svg>
<div style="position:absolute;left:0px;top:972px;width:1920px;height:1px;background:#c8c8c8"></div>
<div style="position:absolute;left:0px;top:973px;width:1920px;height:47px;background:#f3f2f1"></div>
<div class="t" style="left:21.0px;top:989.7px;font-size:14.5px;color:#444;font-weight:400;">Ready</div>
<svg style="position:absolute;left:108px;top:987px;" width="22" height="20" viewBox="0 0 22 20"><g fill="none" stroke="#444" stroke-width="1.5"><path d="M8 18.5 H0.75 V0.75 H21 V6"/><path d="M1 4 H21"/><path d="M3.5 8 H10 M3.5 11.5 H7 M3.5 15 H7"/><circle cx="15" cy="13.5" r="6"/></g><circle cx="15" cy="13.5" r="3" fill="#444"/></svg>
<div style="position:absolute;left:1451px;top:973px;width:62px;height:47px;background:#d0cfce"></div>
<svg style="position:absolute;left:1471px;top:986px;" width="20" height="20" viewBox="0 0 20 20"><g fill="none" stroke="#444" stroke-width="1.5"><rect x="0.75" y="0.75" width="18.5" height="18.5"/><path d="M6.8 1 V19 M12.9 1 V19 M1 6.8 H19 M1 12.9 H19"/></g></svg>
<svg style="position:absolute;left:1533px;top:986px;" width="22" height="20" viewBox="0 0 22 20"><g fill="none" stroke="#444" stroke-width="1.5"><rect x="0.75" y="0.75" width="20.5" height="18.5"/><rect x="5" y="3.75" width="12" height="12.5"/><path d="M8 7.5 H14 M8 10 H14 M8 12.5 H14"/></g></svg>
<svg style="position:absolute;left:1595px;top:986px;" width="22" height="20" viewBox="0 0 22 20"><g fill="none" stroke="#444" stroke-width="1.5"><rect x="0.75" y="0.75" width="20.5" height="18.5"/><path d="M7 1 V12 H1 M13 1 V12 H7"/></g></svg>
<div style="position:absolute;left:1645px;top:995px;width:11px;height:1.5px;background:#555"></div>
<div style="position:absolute;left:1665px;top:995px;width:148px;height:2px;background:#a8a8a8"></div>
<div style="position:absolute;left:1735px;top:988px;width:8px;height:17px;background:#777"></div>
<svg style="position:absolute;left:1820px;top:990px;" width="13" height="13" viewBox="0 0 13 13"><path d="M6.5 0 V13 M0 6.5 H13" stroke="#555" stroke-width="1.2"/></svg>
<div class="t" style="left:1861.0px;top:989.3px;font-size:15px;color:#444;font-weight:400;">100%</div>
<div style="position:absolute;left:0px;top:1020px;width:1920px;height:10px;background:#1b1b1b"></div>
<div style="position:absolute;left:72px;top:1020px;width:431px;height:10px;background:#4a4a4a;border-top:1px solid #6a6a6a;border-left:1px solid #6a6a6a;box-sizing:border-box"></div>
<div style="position:absolute;left:916px;top:1020px;width:65px;height:10px;background:#3a3a3a"></div>
<div style="position:absolute;left:1911px;top:1022px;width:2px;height:8px;background:#999"></div>
<div style="position:absolute;left:1755px;top:1027px;width:2px;height:3px;background:#ddd"></div>
<div style="position:absolute;left:1770px;top:1027px;width:2px;height:3px;background:#ddd"></div>
<div style="position:absolute;left:1782px;top:1027px;width:2px;height:3px;background:#ddd"></div>
</body></html>
